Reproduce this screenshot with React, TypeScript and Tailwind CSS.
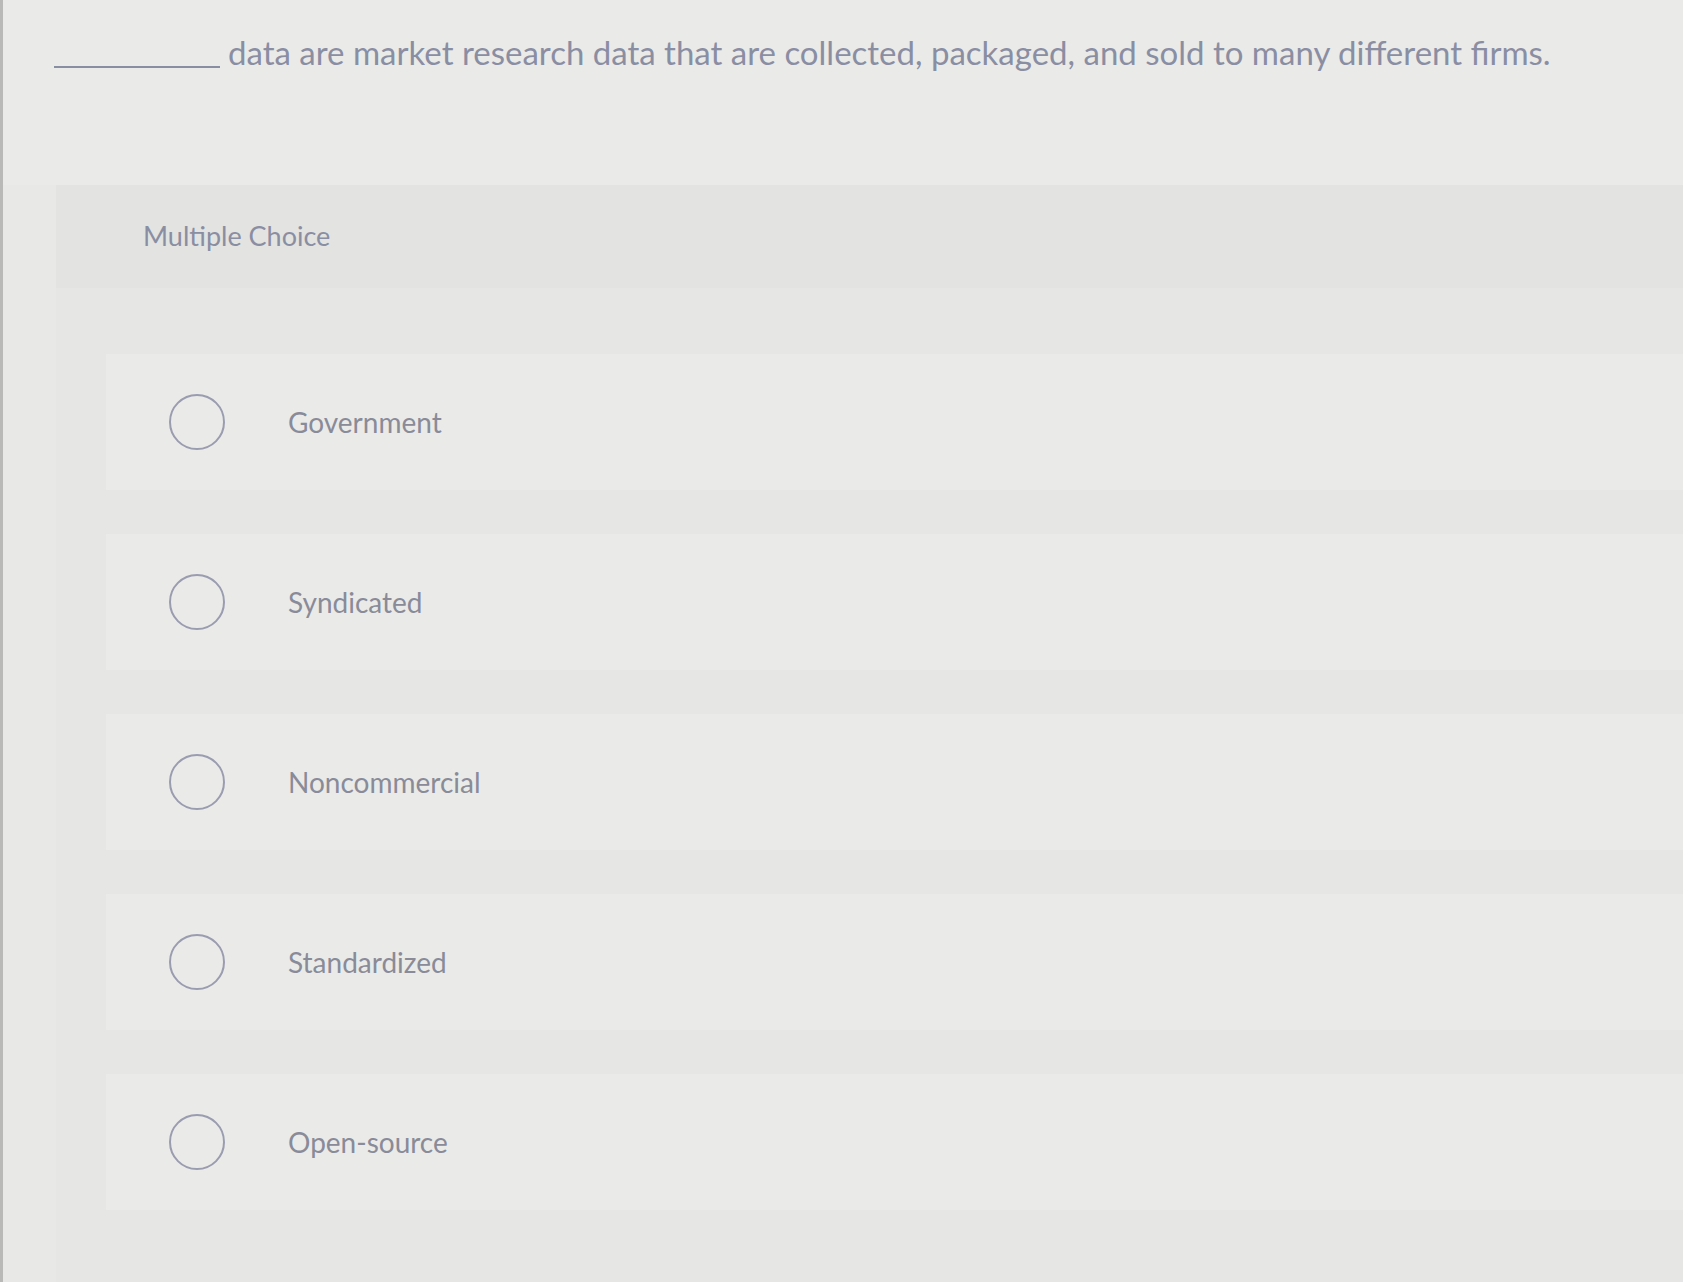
import React from "react";

const options = ["Government", "Syndicated", "Noncommercial", "Standardized", "Open-source"];

export default function App() {
  return (
    <div
      className="w-[1683px] h-[1282px] overflow-hidden bg-[#e8e8e6] flex"
      style={{ fontFamily: "Lato, 'Open Sans', sans-serif" }}
    >
      <div className="w-[3px] bg-[#b9b9b7] shrink-0" />
      <div className="flex-1 flex flex-col">
        <div className="h-[185px] pl-[51px] pt-[30px] bg-[#eaeae8]">
          <p className="flex items-end text-[33px] leading-[44px] text-[#8a8ea3]">
            <span className="inline-block w-[166px] h-[2px] bg-[#8a8ea3] mb-[6px] mr-[8px]" />
            <span>data are market research data that are collected, packaged, and sold to many different firms.</span>
          </p>
        </div>
        <div className="flex-1 ml-[53px] flex flex-col bg-[#e3e3e1]">
          <div className="h-[103px] flex items-center pl-[87px] text-[27px] text-[#8a8ea3]">
            Multiple Choice
          </div>
          <div className="flex-1 bg-[#e6e6e4] flex flex-col pt-[66px]">
            {options.map((o) => (
              <div key={o} className="h-[180px] flex flex-col">
                <div className="h-[136px] ml-[50px] bg-[#eaeae8] flex items-center pl-[63px]">
                  <span className="w-[56px] h-[56px] rounded-full border-2 border-[#9a9cb0] shrink-0" />
                  <span className="ml-[63px] text-[28px] text-[#898b99]">{o}</span>
                </div>
              </div>
            ))}
          </div>
        </div>
      </div>
    </div>
  );
}
